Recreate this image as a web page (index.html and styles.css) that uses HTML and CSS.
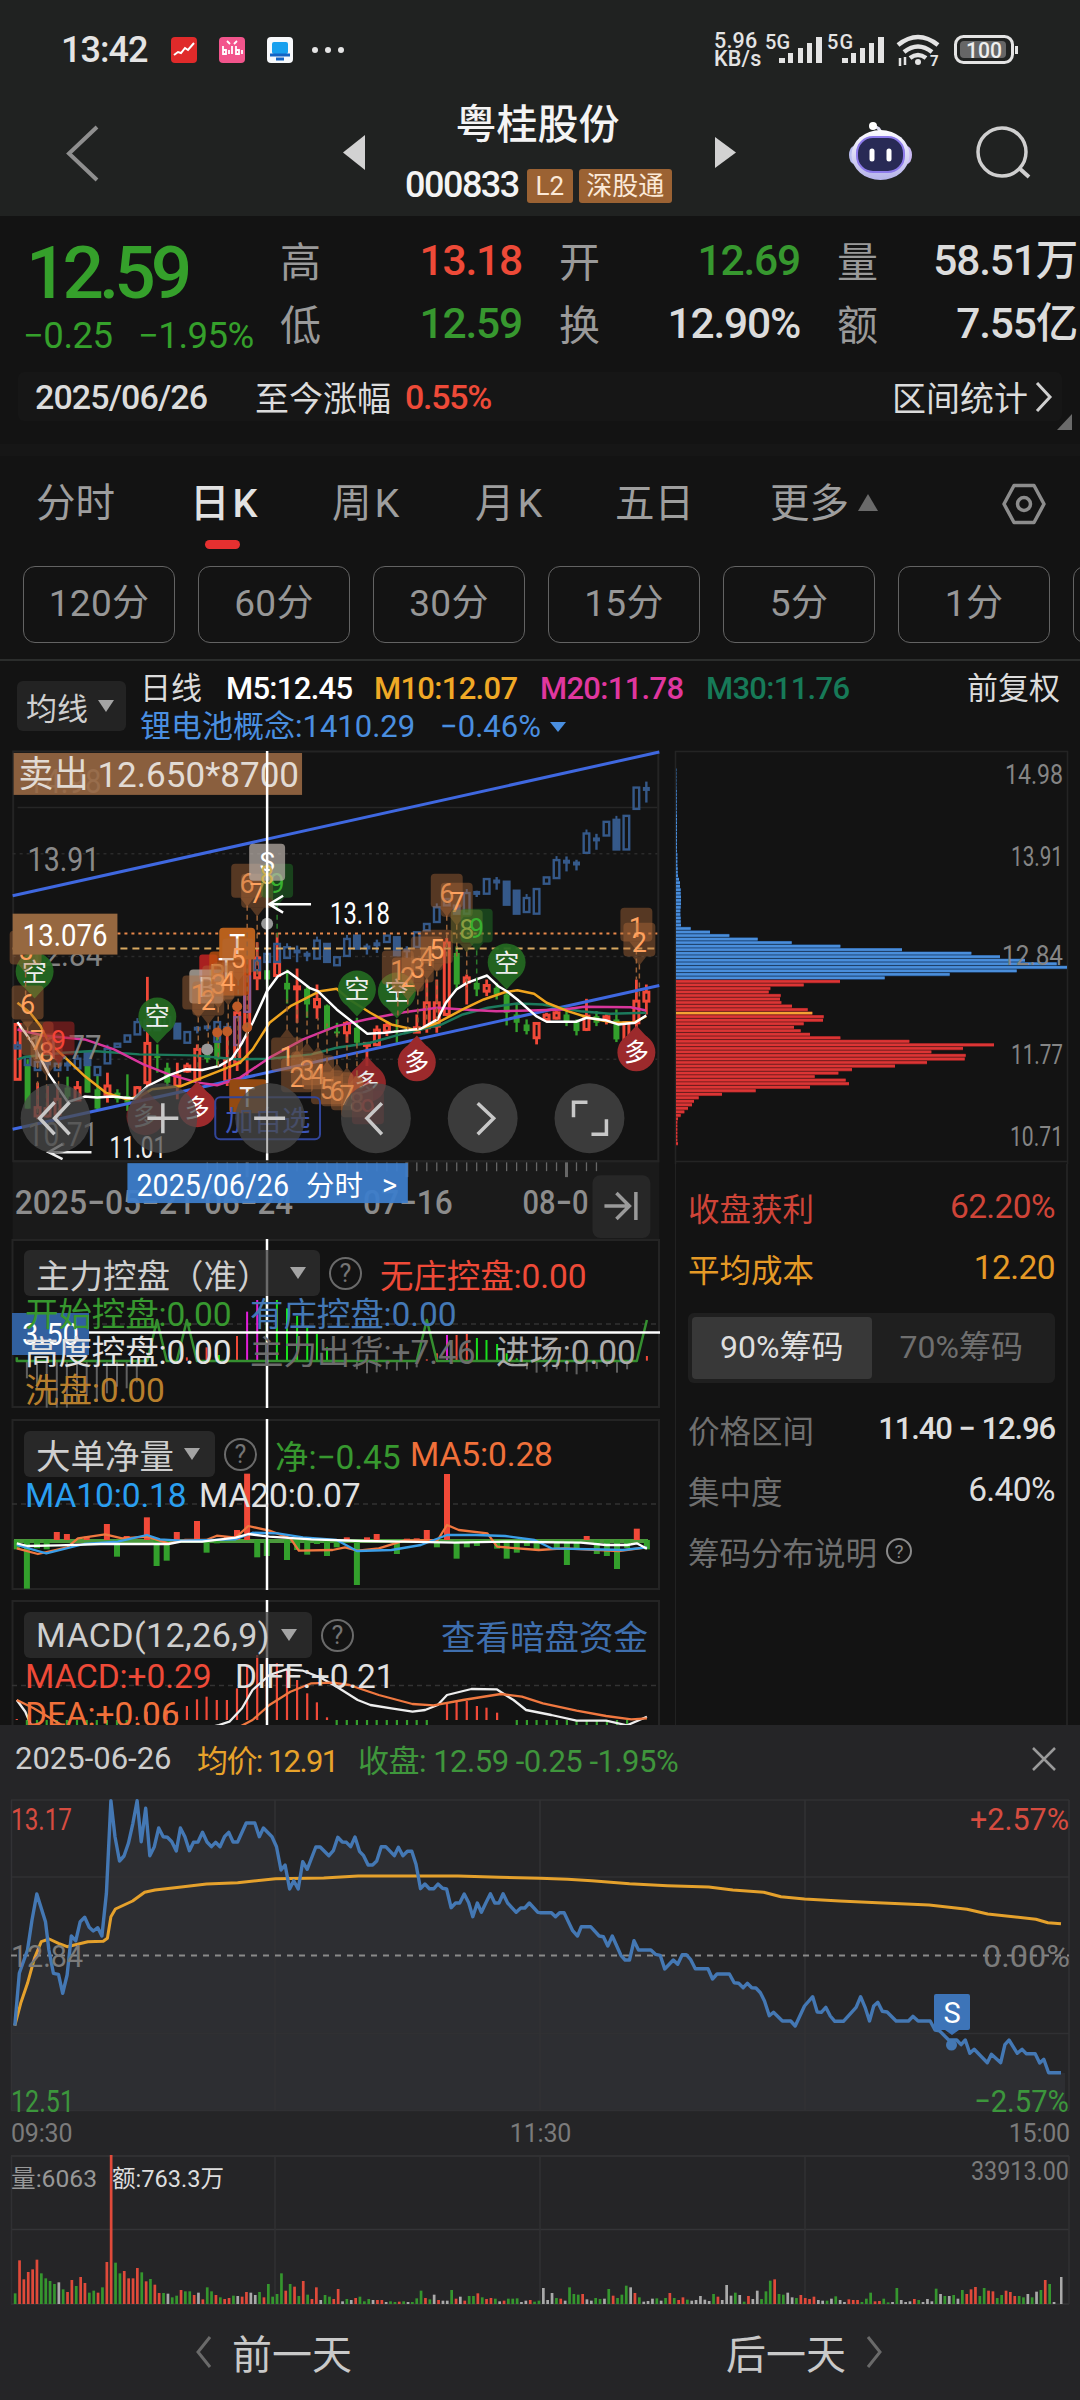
FILE: index.html
```html
<!DOCTYPE html>
<html lang="zh-CN">
<head>
<meta charset="utf-8">
<title>粤桂股份 000833</title>
<link rel="stylesheet" href="styles.css">
</head>
<body>
<header class="top">
  <div class="status">
    <span class="clock">13:42</span>
    <svg class="apps" width="174" height="28" viewBox="170 36 174 28">
      <rect x="171" y="37" width="26" height="26" rx="4" fill="#e02a2a"/>
      <path d="M174 55l4-3 3 1 4-5 3 2 6-7" fill="none" stroke="#fff" stroke-width="2"/>
      <rect x="219" y="37" width="26" height="26" rx="4" fill="#f2558c"/>
      <path d="M223 46v8h3v-4h-3M229 50v4M232 46v8M236 46v8h3v-4h-3M242 50v4M227 41l3 3M237 41l-3 3" fill="none" stroke="#fff" stroke-width="1.8"/>
      <rect x="267" y="37" width="26" height="26" rx="4" fill="#f7f9fb"/>
      <rect x="272" y="42" width="16" height="12" rx="2" fill="#18a0ee"/><path d="M270 55h20M276 59h8" stroke="#1464c4" stroke-width="3"/>
      <g fill="#e4e4e4"><circle cx="315" cy="50" r="3"/><circle cx="328" cy="50" r="3"/><circle cx="341" cy="50" r="3"/></g>
    </svg>
    <span class="speed">5.96<br>KB/s</span>
    <svg class="signal" width="255" height="36" viewBox="765 32 255 36">
      <g class="lbl" fill="#e4e4e4" font-size="20" font-weight="500"><text x="765" y="49" textLength="25">5G</text><text x="827" y="49" textLength="26">5G</text></g>
      <g fill="#e4e4e4"><path d="M779 58h6v5h-6zM788 53h5v10h-5zM798 48h5v15h-5zM807 43h5v20h-5zM816 37h6v26h-6zM842 58h6v5h-6zM851 53h5v10h-5zM860 48h5v15h-5zM869 43h5v20h-5zM878 37h6v26h-6z"/></g>
      <g fill="none" stroke="#e4e4e4" stroke-width="4.5"><path d="M898 45q20-16 40 0M904 52q14-11 28 0M910 58q8-6 16 0"/><path d="M900 58v8M905 57v8" stroke-width="2.5"/></g>
      <circle cx="918" cy="62" r="3" fill="#e4e4e4"/>
      <text class="lbl" x="930" y="66" font-size="15" fill="#e4e4e4" font-weight="700">7</text>
      <rect x="955.500" y="36.500" width="57" height="26" rx="8" fill="none" stroke="#e4e4e4" stroke-width="3"/>
      <rect x="960" y="41" width="46" height="17" rx="4" fill="#666"/>
      <path d="M1016.500 46v8" stroke="#e4e4e4" stroke-width="3"/>
      <text class="lbl" x="966" y="58" font-size="22" font-weight="500" fill="#eee" textLength="36" lengthAdjust="spacingAndGlyphs">100</text>
    </svg>
  </div>
  <nav class="nav">
    <svg class="ico" width="34" height="60" viewBox="65 123 34 60"><path d="M97 127L69 153.500L97 180" fill="none" stroke="#8f8f8f" stroke-width="4"/></svg>
    <svg class="ico prev" width="24" height="36" viewBox="342 134 24 36"><path d="M343 152.500L365 135v35z" fill="#d2d2d2"/></svg>
    <div class="name">
      <h1>粤桂股份</h1>
      <div class="code"><b>000833</b><i>L2</i><i class="sz">深股通</i></div>
    </div>
    <svg class="ico next" width="24" height="36" viewBox="713 134 24 36"><path d="M735 152.500L714 137v31z" fill="#d2d2d2"/></svg>
    <svg class="ico robot" width="66" height="62" viewBox="846 120 66 62">
      <defs><linearGradient id="rb" x1="0" y1="0" x2="0" y2="1"><stop offset="0" stop-color="#fdfcff"/><stop offset="1" stop-color="#b5b3ea"/></linearGradient></defs>
      <path d="M880 134q-1-7-7-7" fill="none" stroke="#dcdcf0" stroke-width="3"/><circle cx="872" cy="126" r="4" fill="#fff"/>
      <ellipse cx="853" cy="155" rx="5" ry="9" fill="#b9bdf0"/><ellipse cx="906" cy="155" rx="5" ry="9" fill="#c9b9f4"/>
      <ellipse cx="879.500" cy="155" rx="29" ry="25" fill="url(#rb)"/>
      <rect x="856" y="137" width="47" height="35" rx="16" fill="#282a55" stroke="#8d7bea" stroke-width="2"/>
      <path d="M871 151v8M888 151v8" stroke="#fff" stroke-width="5" stroke-linecap="round"/>
    </svg>
    <svg class="ico" width="58" height="58" viewBox="973 123 58 58"><circle cx="1001" cy="152" r="24" fill="none" stroke="#cfcfcf" stroke-width="3.500"/><path d="M1018 168l10 9" stroke="#cfcfcf" stroke-width="4"/></svg>
  </nav>
</header>

<section class="quote">
  <div class="last"><strong>12.59</strong><p><span>−0.25</span><span>−1.95%</span></p></div>
  <dl>
    <div><dt>高</dt><dd class="up">13.18</dd></div>
    <div><dt>开</dt><dd class="down">12.69</dd></div>
    <div><dt>量</dt><dd>58.51万</dd></div>
    <div><dt>低</dt><dd class="down">12.59</dd></div>
    <div><dt>换</dt><dd>12.90%</dd></div>
    <div><dt>额</dt><dd>7.55亿</dd></div>
  </dl>
</section>
<section class="since">
  <span class="day">2025/06/26</span><span class="t">至今涨幅</span><span class="up pct">0.55%</span>
  <span class="stat">区间统计</span>
  <svg width="18" height="32" viewBox="0 0 18 32"><path d="M2 2L15 16L2 30" fill="none" stroke="#d0d0d0" stroke-width="3"/></svg>
  <i class="corner"></i>
</section>
<nav class="tabs">
  <a>分时</a><a class="on k">日K</a><a class="k">周K</a><a class="k">月K</a><a>五日</a><a>更多</a>
  <svg class="tri" width="20" height="17" viewBox="0 0 20 17"><path d="M10 0L20 17H0z" fill="#6a6a6a"/></svg>
  <svg class="gear" width="44" height="42" viewBox="0 0 44 42"><path d="M12 2.500H32L42 21L32 39.500H12L2 21z" fill="none" stroke="#8c8c8c" stroke-width="3.500" stroke-linejoin="round"/><circle cx="22" cy="21" r="6.500" fill="none" stroke="#8c8c8c" stroke-width="3.500"/></svg>
</nav>
<div class="periods"><a>120分</a><a>60分</a><a>30分</a><a>15分</a><a>5分</a><a>1分</a><a></a></div>

<div class="legend">
  <div class="select"><span>均线</span><i></i></div>
  <div class="lines">
    <p><span class="l0">日线</span><span class="l1">M5:12.45</span><span class="l2">M10:12.07</span><span class="l3">M20:11.78</span><span class="l4">M30:11.76</span><span class="fq">前复权</span></p>
    <p class="idx"><span class="i1">锂电池概念:1410.29</span><span class="i2">−0.46%</span><i></i></p>
  </div>
</div>

<main class="board">
  <div class="left">
    <svg id="kline" class="kline" width="660" height="492" viewBox="0 748 660 492"></svg>
    <section class="panel p1">
      <svg id="ctrl" width="648" height="169" viewBox="12 1239 648 169"></svg>
      <div class="bar"><div class="select"><span>主力控盘（准）</span><i></i></div><em>?</em><span class="red">无庄控盘:0.00</span></div>
      <p><span class="green w225">开始控盘:0.00</span><span class="blue">有庄控盘:0.00</span></p>
      <p><span class="white w225">高度控盘:0.00</span><span class="dim w246">主力出货:+7.46</span><span class="soft">进场:0.00</span></p>
      <p><span class="gold">洗盘:0.00</span></p>
    </section>
    <section class="panel p2">
      <svg id="net" width="648" height="171" viewBox="12 1419 648 171"></svg>
      <div class="bar"><div class="select"><span>大单净量</span><i></i></div><em>?</em><span class="green w135">净:−0.45</span><span class="orange">MA5:0.28</span></div>
      <p><span class="sky w174">MA10:0.18</span><span class="white">MA20:0.07</span></p>
    </section>
    <section class="panel p3">
      <svg id="macd" width="648" height="125" viewBox="12 1600 648 125"></svg>
      <div class="bar"><div class="select"><span>MACD(12,26,9)</span><i></i></div><em>?</em><a>查看暗盘资金</a></div>
      <p><span class="red w210">MACD:+0.29</span><span class="white">DIFF:+0.21</span></p>
      <p><span class="orange">DEA:+0.06</span></p>
    </section>
  </div>
  <aside class="chips">
    <svg id="chips" width="394" height="416" viewBox="675 748 394 416"></svg>
    <div class="info">
      <p class="red"><span>收盘获利</span><b>62.20%</b></p>
      <p class="amber"><span>平均成本</span><b>12.20</b></p>
      <div class="seg"><a class="on">90%筹码</a><a>70%筹码</a></div>
      <p><span>价格区间</span><b class="rng">11.40 − 12.96</b></p>
      <p><span>集中度</span><b>6.40%</b></p>
      <p class="note"><span>筹码分布说明</span><em>?</em></p>
    </div>
  </aside>
</main>

<section class="sheet">
  <div class="head"><span class="d">2025-06-26</span><span class="a">均价: 12.91</span><span class="c">收盘: 12.59 -0.25 -1.95%</span>
    <svg width="26" height="26" viewBox="0 0 26 26"><path d="M2 2L24 24M24 2L2 24" stroke="#9a9a9a" stroke-width="2.500"/></svg></div>
  <svg id="day" class="day" width="1080" height="320" viewBox="0 1796 1080 320"></svg>
  <div class="times"><span>09:30</span><span>11:30</span><span>15:00</span></div>
  <svg id="vol" class="vol" width="1080" height="152" viewBox="0 2153 1080 152"></svg>
  <footer>
    <a><svg width="17" height="34" viewBox="0 0 17 34"><path d="M15 2L3 17L15 32" fill="none" stroke="#6a6a6a" stroke-width="3"/></svg>前一天</a>
    <a>后一天<svg width="17" height="34" viewBox="0 0 17 34"><path d="M2 2L14 17L2 32" fill="none" stroke="#6a6a6a" stroke-width="3"/></svg></a>
  </footer>
</section>
<script src="charts.js"></script>
</body>
</html>
```
FILE: styles.css
```css
* { box-sizing: border-box; margin: 0; padding: 0; }
body { width: 1080px; height: 2400px; overflow: hidden; background: #131313; color: #dcdcdc; font-family: Roboto, "Noto Sans CJK SC", sans-serif; font-size: 32px; white-space: nowrap; }
svg { display: block; flex: none; overflow: visible; }
svg text, .lbl { font-family: Roboto, "Noto Sans CJK SC", sans-serif; }
i, em { font-style: normal; }
p { display: flex; }
.up, .red { color: #ee4a38; }
.down, .green { color: #37982f; }
.top { height: 216px; background: #202221; }
.status { display: flex; height: 100px; padding: 32px 60px 0 61px; align-items: flex-start; color: #e4e4e4; }
.clock { width: 109px; font-size: 36px; line-height: 36px; letter-spacing: -1px; font-weight: 500; }
.apps { margin-top: 4px; }
.speed { margin-left: 370px; width: 51px; font-size: 21.500px; line-height: 18px; font-weight: 500; letter-spacing: .2px; }
.nav { display: flex; height: 116px; padding-left: 65px; align-items: flex-start; }
.nav .ico { margin-top: 23px; }
.nav .prev { margin: 34px 0 0 243px; }
.nav .name { width: 267px; margin-left: 39px; }
.nav h1 { font-size: 41px; line-height: 50px; font-weight: 500; color: #f4f4f4; text-align: center; padding-right: 2px; }
.code { display: flex; margin-top: 18px; align-items: center; }
.code b { width: 123px; font-size: 36px; line-height: 35px; font-weight: 500; letter-spacing: -1.500px; color: #f4f4f4; }
.code i { width: 46px; height: 34px; margin-right: 6px; border-radius: 3px; background: #9b6233; color: #fbe9d8; font-size: 26px; line-height: 34px; text-align: center; }
.code .sz { width: 94px; margin: 0; }
.nav .next { margin: 34px 0 0 42px; }
.nav .robot { margin: 20px 61px 0 109px; }

.quote { display: flex; height: 150px; }
.last { width: 281px; padding: 21px 0 0 26px; color: #35a02b; }
.last strong { display: block; font-size: 73px; line-height: 72px; font-weight: 500; letter-spacing: -5px; }
.last p { margin: 9px 0 0 -3px; font-size: 36.500px; line-height: 36px; }
.last span { width: 115px; letter-spacing: -.5px; }
.quote dl { display: grid; width: 798px; height: 126px; margin: 11px 0 0 -1px; grid-template-columns: 242px 241px 240px; column-gap: 37px; grid-auto-rows: 63px; }
.quote dl div { display: flex; justify-content: space-between; align-items: center; }
dt { font-size: 41px; color: #9a9a9a; }
dd { font-size: 42.500px; line-height: 57px; padding-top: 3px; font-weight: 500; letter-spacing: -1.200px; }
.since { position: relative; display: flex; align-items: center; height: 49px; margin: 6px 18px 0; padding: 0 9px 0 17px; background: #161616; border-radius: 6px; font-size: 34px; }
.since .day { width: 220px; font-weight: 500; letter-spacing: -.9px; }
.since .t { width: 150px; }
.since .pct { letter-spacing: -1.3px; font-weight: 500; }
.since .stat { margin-left: auto; margin-right: 7px; }
.corner { position: absolute; right: -10px; top: 42px; border-left: 15px solid transparent; border-bottom: 16px solid #6a6a6a; }

.tabs { position: relative; display: flex; height: 122px; margin-top: 23px; padding: 23px 0 0 36px; border-top: 12px solid #161616; align-items: flex-start; color: #9e9e9e; font-size: 39.500px; line-height: 49px; }
.tabs a:nth-child(1) { width: 154px; }
.tabs a:nth-child(2) { width: 142px; }
.tabs a:nth-child(3) { width: 143px; }
.tabs a:nth-child(4) { width: 140px; }
.tabs a:nth-child(5) { width: 155px; }
.tabs a:nth-child(6) { width: 88px; }
.tabs .k { letter-spacing: 3px; }
.tabs .on { position: relative; color: #e2e2e2; font-weight: 500; }
.tabs .on::after { content: ""; position: absolute; left: 15px; top: 61px; width: 35px; height: 9px; border-radius: 5px; background: #e63030; }
.tri { margin-top: 15px; }
.gear { margin: 4px 0 0 124px; }
.periods { display: flex; gap: 23px; width: 1080px; overflow: hidden; height: 95px; padding-left: 23px; border-bottom: 2px solid #2b2d2c; }
.periods a { flex: none; width: 152px; height: 77px; border: 1.500px solid #636363; border-radius: 12px; color: #979797; font-size: 37px; line-height: 74px; text-align: center; letter-spacing: .3px; }

.legend { display: flex; height: 87px; padding-left: 17px; }
.select { display: flex; align-items: center; background: rgba(48,48,48,.72); border-radius: 6px; color: #cfcfcf; }
.select i { border: 8px solid transparent; border-top: 12px solid #a4a4a4; border-bottom: 0; }
.legend .select { width: 109px; height: 50px; margin-top: 20px; padding-left: 9px; font-size: 31px; background: #232323; }
.legend .select i { margin-left: 10px; }
.lines { width: 939px; margin-left: 14px; padding-top: 9px; font-weight: 500; font-size: 31px; line-height: 38px; }
.lines p { align-items: center; }
.l0, .fq, .idx { font-weight: 400; }
.l0 { width: 86px; } .l1 { width: 148px; color: #fff; } .l2 { width: 166px; color: #f0a926; } .l3 { width: 166px; color: #e0379f; } .l4 { color: #177a58; }
.l1, .l2, .l3, .l4 { letter-spacing: -.7px; }
.fq { margin-left: auto; margin-right: 19px; }
.idx { color: #4a8fe0; }
.i1 { width: 300px; } .i2 { width: 110px; }
.idx i { border: 8px solid transparent; border-top: 10px solid #4a8fe0; border-bottom: 0; }

.board { display: flex; height: 977px; overflow: hidden; }
.left { width: 660px; flex: none; }
.kline { height: 491px; }
.panel { position: relative; width: 648px; margin: 0 0 10px 12px; padding: 11px 0 0 12px; font-size: 33.500px; }
.panel > svg { position: absolute; left: 0; top: 0; }
.panel .bar, .panel p { position: relative; }
.p1 { height: 170px; } .p2 { height: 171px; padding-top: 12px; } .p3 { height: 125px; padding-top: 12px; margin: 0 0 0 12px; }
.bar { display: flex; height: 46px; align-items: center; }
.bar .select { height: 46px; padding-left: 12px; }
.p1 .select { width: 296px; } .p2 .select { width: 191px; } .p3 .select { width: 288px; }
.p1 .select i { margin-left: 19px; } .p2 .select i { margin-left: auto; margin-right: 15px; } .p3 .select i { margin-left: auto; margin-right: 15px; }
.p2 .select span { font-size: 34.500px; } .p3 .select span { font-size: 34px; letter-spacing: .4px; }
em { width: 33px; height: 33px; margin: 0 18px 0 9px; border: 2px solid #6a6a6a; border-radius: 50%; color: #757575; font-size: 25px; line-height: 29px; text-align: center; }
.panel p { padding-left: 1px; line-height: 37px; height: 38px; }
.panel p, .bar > span { letter-spacing: -.1px; }
.w225 { width: 225px; } .w246 { width: 246px; } .w135 { width: 135px; } .w174 { width: 174px; } .w210 { width: 210px; }
.bar a { margin-left: auto; margin-right: 12px; color: #3f6fae; font-size: 34.500px; }
.blue { color: #4478b5; } .white { color: #e2e2e2; } .dim { color: #6c6c6c; } .soft { color: #ababab; } .gold { color: #b87f2c; } .orange { color: #f0703a; } .sky { color: #2a9ff0; }

.chips { width: 394px; margin-left: 15px; }
.info { height: 562px; margin: 0 1px 0 0; padding: 12px 11px 0 12px; border: solid #222; border-width: 0 2px 0 1px; }
.info p { justify-content: space-between; align-items: center; height: 61px; color: #6f6f6f; font-size: 31.500px; }
.info p.red { color: #cf4438; } .info p.amber { color: #e59a26; }
.info b { font-size: 33.500px; font-weight: 400; letter-spacing: -.6px; }
.info p:not(.red):not(.amber) b { color: #dedede; }
.info .rng { font-weight: 500; font-size: 31px; letter-spacing: -1.100px; }
.seg { display: flex; height: 70px; margin: 15px 0; padding: 4px; background: #1f1f1f; border-radius: 6px; }
.seg a { width: 180px; line-height: 61px; text-align: center; border-radius: 4px; color: #6f6f6f; }
.seg .on { background: #383838; color: #dedede; }
.info .note { justify-content: flex-start; }
.note em { width: 26px; height: 26px; margin: 0 0 0 9px; font-size: 19px; line-height: 23px; color: #8a8a8a; border-color: #8a8a8a; }

.sheet { position: relative; height: 675px; background: #252527; }
.head { display: flex; height: 71px; padding: 0 23px 4px 15px; align-items: center; font-size: 31px; color: #cdcdcd; }
.head .d { width: 182px; } .head .a { width: 161px; color: #e8a32b; letter-spacing: -1.600px; } .head .c { color: #3f963c; letter-spacing: -.5px; }
.head svg { margin-left: auto; }
.times { display: flex; justify-content: space-between; height: 37px; padding: 5px 10px 0 11px; font-size: 25px; line-height: 26px; color: #7b7b7b; letter-spacing: -.2px; }
footer { display: flex; height: 95px; justify-content: space-between; padding: 0 197px 2px 195px; align-items: center; font-size: 40px; color: #c9c9c9; }
footer a { display: flex; align-items: center; gap: 20px; }
```
FILE: charts.js
```javascript
const RED = '#f14938', GREEN = '#33a02c', BLUE = '#35598a';
const out = {};
function put(id, s) { out[id] = (out[id] || '') + s; }
function flush() { for (const id in out) document.getElementById(id).innerHTML = out[id]; }
const line = (x1, y1, x2, y2, c, w = 2, extra = '') => `<path d="M${x1} ${y1}L${x2} ${y2}" stroke="${c}" stroke-width="${w}" fill="none" ${extra}/>`;
const rect = (x, y, w, h, c, extra = '') => `<rect x="${x}" y="${y}" width="${w}" height="${h}" fill="${c}" ${extra}/>`;
const text = (x, y, s, size, c, len, extra = '') => `<text x="${x}" y="${y}" font-size="${size}" fill="${c}" ${len ? `textLength="${len}" lengthAdjust="spacingAndGlyphs"` : ''} ${extra}>${s}</text>`;
const nums = s => s.trim().split(/\s+/).map(p => p.split(',').map(Number));
// points on a drawing grid of kx by 3 units per pixel
const scaled = (s, kx, y0, x0 = 0) => nums(s).map(([x, y]) => [+(x0 + x / kx).toFixed(1), +(y0 + y / 3).toFixed(1)]);
const poly = (pts, c, w) => `<polyline points="${pts.join(' ')}" fill="none" stroke="${c}" stroke-width="${w}" stroke-linejoin="round"/>`;
const K = 2.376;
const X = i => 17 + 10 * i;

/* daily candles */
put('kline', rect(12, 1163, 648, 77, '#1a1a1a'));
put('kline', `<path d="M12.500 1162V751.500H659V1162z" fill="none" stroke="#242424" stroke-width="2"/>`);
put('kline', line(17, 807.5, 658, 807.5, '#262626', 1.5));
[854, 957, 1060].forEach(y => put('kline', line(12, y, 658, y, '#2b2b2b', 1.5, 'stroke-dasharray="3 4"')));

const candles = `r375,540,375,540 g480,628,500,628 r550,660,625,650 r560,655,628,650 r560,650,600,645 g532,600,565,592 r545,605,565,602 g460,580,470,580 g530,630,570,628 r520,610,560,585 g570,610,580,600 g525,635,590,610 r560,600,565,598 r232,560,432,550 g435,520,470,475 g490,560,505,550 r490,600,530,560 r490,520,500,515 r435,545,450,540 g455,490,460,480 g400,505,430,480 r380,560,480,545 r310,515,340,490 r105,535,150,380 r128,272,175,235 g160,260,212,240 r100,230,190,228 g210,312,250,270 r207,370,262,265 g262,355,268,315 r255,358,300,322 g315,395,318,392 g370,410,396,402 r365,430,372,400 g355,435,385,430 r430,500,432,436 r378,440,392,436 r365,410,378,395 g360,430,392,398 g385,402,390,398 r345,400,385,398 r240,400,310,385 r240,400,310,380 r115,350,130,345 g140,270,160,255 r225,315,235,248 g240,290,250,270 r240,290,258,275 g250,300,265,285 g280,378,285,340 g310,398,345,370 g360,405,375,395 r370,435,372,415 r340,365,347,360 r335,360,340,356 g335,380,345,370 g360,408,368,395 r298,395,350,390 g335,380,350,370 r345,375,352,360 g330,428,360,420 r365,440,370,438 r240,400,305,370 r255,345,278,305`.split(' ');
candles.forEach((d, i) => {
  const c = d[0] === 'r' ? RED : GREEN, [h, l, t, b] = d.slice(1).split(',').map(v => 900 + v / 3), x = X(i);
  if (d[0] === 'r') put('kline', line(x, h, x, t, c, 2.8) + line(x, b, x, l, c, 2.8) + rect(x - 2.500, t, 5, Math.max(b - t, 2), '#131313', `stroke="${c}" stroke-width="3"`));
  else put('kline', line(x, h, x, l, c, 2.4) + rect(x - 3, t, 6, Math.max(b - t, 2), c));
});

/* sector index candles */
const idx = nums(`435,450 470,500 485,515 480,515 490,515 485,515 475,510 455,500 500,530 445,495 430,445 405,430 365,408 360,395 355,395 350,380 370,420 395,433 380,402 378,395 365,430 380,400 350,440 228,340 180,215 160,190 130,190 140,178 138,188 155,185 120,180 130,190 170,200 115,172 105,150 132,165 120,160 105,130 110,170 140,175 95,145 70,95 20,70 -5,20 15,45 -23,45 -27,-8 -65,-15 -68,-30 -57,18 -30,45 -8,40 -35,45 -70,-45 -122,-62 -130,-85 -120,-88 -202,-138 -198,-150 -237,-190 -243,-148 -255,-148 -340,-270 -355,-292`);
const solid = new Set([7, 14, 16, 31, 34, 38, 44, 49, 50, 60]);
idx.forEach(([a, b], i) => {
  const y = 900 + a / 3, h = (b - a) / 3, x = X(i), c = i === 22 || i === 23 ? '#8a5a92' : BLUE;
  if ([3, 5, 18, 19, 28, 29, 35, 36, 39, 46, 48, 55, 56, 58, 63].includes(i)) put('kline', line(x, y, x, y + h, c, 2.4) + line(x - 3.500, y + h * .35, x + 3.500, y + h * .35, c, 4));
  else put('kline', rect(x - 2.8, y + 1, 5.600, Math.max(h - 2, 3), solid.has(i) ? c : 'none', `stroke="${c}" stroke-width="2.4"`) + (i % 3 ? '' : line(x, y - 3, x, y + 1, c, 2)));
});

put('kline', line(12, 896, 660, 752, '#3f68e0', 3) + line(12, 1130, 660, 986, '#3f68e0', 3));
put('kline', line(117, 934, 658, 934, '#e8884a', 2, 'stroke-dasharray="3 4"') + line(12, 949, 658, 949, '#d8a860', 2, 'stroke-dasharray="7 5"'));
[['40,480 60,472 150,460 220,455 330,465 460,468 560,480 640,478 740,465 800,445 880,430 960,402 1050,375 1100,345 1160,325 1230,312 1290,315 1380,335 1450,343 1537,340', '#1c7a5c'],
 ['40,390 100,408 200,420 270,450 340,495 400,525 470,550 515,558 570,535 640,475 720,420 800,380 870,360 960,338 1040,325 1100,330 1180,335 1260,333 1340,330 1390,322 1500,323 1537,333', '#d8369c'],
 ['40,310 70,340 95,380 115,430 150,470 200,530 250,580 300,600 330,592 360,570 430,560 480,535 530,510 570,490 600,450 640,370 690,320 760,275 800,268 830,300 880,340 930,375 990,392 1040,370 1100,330 1150,300 1200,278 1230,272 1270,283 1300,310 1350,335 1400,355 1460,370 1510,368 1537,350', '#f0a51f'],
 ['40,368 75,430 115,525 160,608 200,592 230,595 265,592 318,598 350,560 400,528 440,510 480,512 520,500 550,478 575,430 600,370 634,275 660,230 683,215 710,240 735,265 755,275 800,330 850,380 873,403 915,400 950,395 1000,388 1040,360 1060,310 1085,270 1110,250 1158,228 1185,260 1205,275 1230,300 1275,350 1300,367 1370,367 1395,355 1440,362 1470,375 1510,370 1537,348', '#fff']
].forEach(([p, c]) => put('kline', poly(scaled(p, K, 900), c, 2.5)));
put('kline', '<g opacity=".95">' + text(27, 793, '14.98', 33, '#888', 74) + text(27, 871, '13.91', 33, '#909090', 72) + text(27, 966, '12.84', 33, '#888', 75) + text(27, 1060, '11.77', 33, '#888', 74) + text(27, 1147, '10.71', 33, '#888', 71) + '</g>');

const balloon = (x, y, s, c, up, o = 1) => put('kline', `<g opacity="${o}"><circle cx="${x}" cy="${y}" r="19" fill="${c}"/><path d="M${x - 13} ${y + (up ? -13 : 13)}L${x} ${y + (up ? -27 : 27)}L${x + 13} ${y + (up ? -13 : 13)}z" fill="${c}"/>${text(x, y + 9, s, 25, '#fff', 0, 'text-anchor="middle"')}</g>`);
[[34, 972], [157, 1017], [357, 990], [397, 992], [507, 963]].forEach(([x, y]) => balloon(x, y, '空', '#246a22', 0, .93));
[[145, 1117, .6], [197, 1109, 1], [367, 1084, .9], [417, 1063, 1], [637, 1053, 1]].forEach(([x, y, o]) => balloon(x, y, '多', '#9c2a2c', 1, o));

/* signal tags: centre x, digit baseline, label, tone, pointer side, end of the dashed stem */
const tones = { o: ['rgba(178,108,58,.42)', '#ffa25f'], g: ['rgba(34,130,40,.42)', '#38b030'], y: ['rgba(130,120,50,.5)', '#d5b050'], r: ['rgba(180,35,35,.5)', '#f44336'] };
function tag(x, y, s, tone = 'o', up = 0, to = 0) {
  const [bg, fg] = tones[tone], t = y - 30, b = y + 4;
  if (to) put('kline', line(x, up ? t - 8 : b + 8, x, to, tone === 'g' ? '#2b7a2c' : '#9a6238', 1.5, 'stroke-dasharray="5 4"'));
  put('kline', rect(x - 16, t, 32, b - t, bg, 'rx="4"') + `<path d="${up ? `M${x - 7} ${t}L${x} ${t - 9}L${x + 7} ${t}z` : `M${x - 7} ${b}L${x} ${b + 9}L${x + 7} ${b}z`}" fill="${bg}"/>` + text(x, y - 1, s, 27, fg, 0, 'text-anchor="middle"'));
}
tag(25, 961, '5', 'o', 0, 1000); tag(27, 1016, '6', 'o', 0, 1040); tag(37, 1052, '7', 'o', 0, 1120); tag(46, 1064, '8', 'o', 0, 1120); tag(58, 1052, '9', 'r', 0, 1120);
put('kline', rect(199, 955, 18, 26, '#a82020', 'rx="3"') + rect(209, 952, 40, 44, 'rgba(190,80,15,.8)', 'rx="4"') + rect(219, 928, 36, 32, '#b8601c', 'rx="4"') + rect(189, 970, 34, 34, 'rgba(190,180,170,.75)', 'rx="4"'));
put('kline', text(198, 998, 'B', 28, '#fff') + text(229, 954, 'T', 27, '#fff') + text(218, 978, 'T', 27, '#fff') + text(209, 984, 'B', 27, '#e8904a'));
tag(198, 1006, '1', 'o', 0, 1070); tag(208, 1012, '2', 'o', 0, 1050); tag(218, 996, '3', 'o', 0, 1070); tag(228, 993, '4', 'o', 0, 1070); tag(238, 969, '5', 'o', 0, 1060);
put('kline', '<g fill="#c05c28"><circle cx="217" cy="1033" r="5"/><circle cx="227" cy="1032" r="5"/><circle cx="237" cy="1007" r="5"/><circle cx="247" cy="1028" r="5"/></g><circle cx="207" cy="1050" r="6" fill="#999"/><circle cx="267" cy="924" r="6" fill="#999"/>');
tag(247, 894, '6', 'o', 0, 1040); tag(257, 904, '7', 'o', 0, 980); tag(277, 894, '9', 'g', 0, 940);
put('kline', rect(249, 844, 36, 37, 'rgba(190,180,172,.7)', 'rx="4"') + text(267, 871, 'S', 26, '#fff', 0, 'text-anchor="middle"') + text(267, 884, '8', 25, '#cfb050', 0, 'text-anchor="middle"'));
tag(398, 981, '1', 'o', 0, 1030); tag(408, 988, '2', 'o', 0, 1030); tag(418, 979, '3', 'o', 0, 1030); tag(427, 967, '4', 'o', 0, 1020); tag(437, 960, '5', 'o', 0, 1020);
tag(447, 904, '6', 'o', 0, 960); tag(457, 913, '7', 'o', 0, 960); tag(467, 940, '8', 'y', 0, 990); tag(477, 939, '9', 'g', 0, 985);
tag(637, 938, '1', 'o', 0, 980); tag(640, 953, '2', 'o', 0, 1000);
[[287, 1068, 1], [297, 1089, 2], [307, 1082, 3], [318, 1086, 4], [327, 1101, 5], [337, 1103, 6], [347, 1107, 7], [357, 1114, 8]].forEach(([x, y, s]) => tag(x, y, s, 'o', 1, 1000 + (x - 287) * .6));
tag(368, 1121, '9', 'r', 1);

put('kline', rect(229, 1080, 38, 34, '#944a12', 'rx="4"') + text(239, 1108, 'T', 27, '#eee'));
put('kline', text(330, 924, '13.18', 31, '#fff', 60) + '<path d="M311 904.500H270M283 896L269 904.500L283 913" fill="none" stroke="#fff" stroke-width="2.500"/>');
put('kline', text(109, 1159, '11.01', 31, '#eee', 57) + '<path d="M91 1153H50M62 1145L48 1153L62 1160" fill="none" stroke="#eee" stroke-width="2.500"/>');
put('kline', `<rect x="215" y="1098" width="105" height="42" rx="5" fill="none" stroke="#31459a" stroke-width="2"/>` + text(225, 1132, '加自选', 28.500, '#3c55b8'));
put('kline', rect(12, 914, 105, 41, '#966840') + text(22, 946, '13.076', 32, '#fff', 85));
put('kline', rect(13, 753, 289, 42, 'rgba(155,106,68,.88)') + text(18, 787, '卖出 12.650*8700', 36, '#e2dbd4', 281));
/* chart controls */
[55, 162, 270, 376, 483, 590].forEach(x => put('kline', `<circle cx="${x}" cy="1119" r="35" fill="rgba(74,74,74,.74)"/>`));
put('kline', line(267, 751, 267, 1084, '#fff', 2.5) + line(267, 1084, 267, 1154, '#bbb', 2) + line(267, 1154, 267, 1163, '#fff', 2.5));
put('kline', '<path d="M54 1103L39 1119L54 1135M69 1103L54 1119L69 1135M147 1119H178M162.500 1104V1134M254 1119H285M382 1104L367 1119L382 1135M478 1104L494 1119L478 1135M574 1118V1103H588M607 1120V1135H592" fill="none" stroke="#c8c8c8" stroke-width="3.500"/>');
/* time ruler */
for (let x = 207; x < 605; x += 10) put('kline', line(x, 1163, x, x === 247 || x === 407 || x === 567 ? 1178 : 1172, '#666', x === 247 || x === 407 || x === 567 ? 3 : 1.3));
put('kline', line(12, 1162, 660, 1162, '#242424'));
[['2025−05−21', 14, 181], ['06−24', 204, 89], ['07−16', 363, 90], ['08−0', 523, 66]].forEach(([s, x, w]) => put('kline', text(x, 1215, s, 34, '#8c8c8c', w, 'font-weight="500"')));
put('kline', rect(127, 1164, 281, 40, 'rgba(61,125,203,.94)') + text(136, 1197, '2025/06/26', 31, '#fff', 153) + text(306, 1197, '分时', 28.500, '#fff') + text(382, 1196, '&gt;', 29, '#fff'));
put('kline', rect(593, 1176, 58, 63, '#272727', 'rx="8"') + '<path d="M605 1207H630M617 1194L630 1207L617 1220M636.500 1193V1221" fill="none" stroke="#9a9a9a" stroke-width="3.500"/>');

/* control indicator */
const frame = (t, b) => `<path d="M12.500 ${b}V${t + 1}H659V${b}z" fill="none" stroke="#242424" stroke-width="2"/>`;
put('ctrl', frame(1239, 1407) + line(12, 1324, 658, 1324, '#333', 1.5, 'stroke-dasharray="5 4"') + rect(12, 1313, 77, 42, '#31609f') + text(22, 1345, '3.50', 31, '#fff', 57));
const bars = (id, base, s, w) => s.split(' ').forEach(d => { const [x, y] = d.slice(1).split(',').map(Number); const c = { r: RED, g: GREEN, l: '#19e01c', m: '#e01fd8', w: '#606060' }[d[0]]; const px = x / K; const top = Math.min(base[0], y), bot = Math.max(base[0], y); put(id, rect((px - w / 2).toFixed(1), base[1] + top / 3, w, (bot - top) / 3, c)); });
bars('ctrl', [422, 1220], 'r444,412 r468,390 r491,382 l520,405 r563,348 m587,275 m611,240 l634,235 l658,240 l682,265 l706,288 l730,318 l753,342 l777,382 r1014,418 r1038,400 m1062,345 r1085,345 r1109,342 l1133,354 l1156,360 l1181,372 l1204,400 l1228,415 r1537,408 w64,475 w88,505 w111,563 w135,563 w159,563 w183,547 w206,528 w230,545 w254,520 w278,500 w301,505 w325,487 w848,448 w872,460 w895,457 w919,448 w943,452 w967,448 w990,442 w1252,448 w1275,458 w1299,455 w1323,448 w1347,455 w1370,463 w1394,455 w1418,447 w1442,440 w1466,458 w1490,448', 2);
put('ctrl', poly(scaled('40,412 40,423 350,423 373,300 396,423 420,423 444,300 468,423 990,423 1014,300 1038,423 1513,423 1537,300', K, 1220), '#358f30', 2.5));
put('ctrl', line(89, 1332.5, 660, 1332.5, '#fff', 2.5) + line(267, 1239, 267, 1408, '#fff', 2.5));

/* net large orders */
put('net', frame(1419, 1589) + line(12, 1504, 658, 1504, '#333', 1.5, 'stroke-dasharray="5 4"') + rect(14, 1539, 634, 4, '#4b9a3c'));
bars('net', [210, 1470], 'g40,238 g64,356 g88,235 g111,238 r135,186 r159,192 r206,200 r254,162 g278,260 r301,198 r349,142 g372,288 g396,272 r420,186 r468,153 g491,248 g515,220 r539,198 r563,180 r587,11 g611,262 g634,258 g682,270 g706,240 g730,254 g753,222 g777,258 g800,232 r824,202 g848,345 r872,202 r895,192 g943,252 r967,206 r990,205 r1014,180 g1038,232 r1062,12 g1085,266 g1109,232 g1133,228 g1181,236 g1204,266 g1228,248 g1252,228 g1275,238 g1323,240 g1347,285 g1370,236 r1394,198 g1418,252 g1442,258 g1466,297 g1490,234 r1513,176 g1537,238', 6);
[['40,235 90,252 160,232 185,205 250,193 290,205 350,200 400,220 440,210 490,210 515,197 560,203 590,168 640,182 690,205 710,242 790,240 820,232 850,242 900,235 960,212 1040,210 1062,165 1090,180 1158,190 1181,230 1280,240 1340,235 1470,243 1537,232', '#f07840'],
 ['40,225 110,250 200,222 280,215 349,195 380,208 430,212 560,208 600,188 660,190 720,202 800,210 848,243 930,240 1000,225 1062,195 1130,195 1200,198 1270,210 1310,235 1480,240 1537,232', '#3a9ee8'],
 ['40,220 65,228 140,226 240,222 400,222 430,215 480,215 560,203 590,192 640,200 740,208 860,213 960,215 1080,218 1200,215 1380,218 1440,225 1490,225 1513,220 1537,236', '#fff']
].forEach(([p, c]) => put('net', poly(scaled(p, K, 1470), c, 2.3)));
put('net', line(267, 1419, 267, 1590, '#fff', 2.5));

/* macd */
put('macd', frame(1600, 1760) + line(12, 1685.5, 658, 1685.5, '#333', 1.5, 'stroke-dasharray="5 4"'));
bars('macd', [750, 1470], 'r40,747 r325,740 r349,725 r372,710 r396,720 r420,725 r444,708 r468,688 r491,680 r515,690 r539,690 r563,655 r587,588 r611,555 r634,568 r658,580 r682,600 r706,630 r730,670 r753,697 r777,742 r1062,700 r1085,695 r1109,693 r1133,708 r1156,713 r1181,728 ' + [64, 88, 111, 135, 159, 183, 206, 230, 254, 278, 301, 800, 824, 848, 872, 895, 919, 943, 967, 990, 1014, 1228, 1252, 1275, 1299, 1323, 1347, 1370, 1394, 1418, 1442, 1466, 1490].map(x => `g${x},766`).join(' '), 2.2);
put('macd', poly(scaled('40,690 60,725 75,770 100,800 460,785 520,765 545,755 575,715 600,660 640,615 680,598 720,602 760,622 800,650 850,690 880,705 930,715 980,725 1010,720 1040,705 1062,675 1120,657 1180,658 1220,690 1250,720 1310,735 1370,752 1440,752 1490,766 1537,740', K, 1470), '#eee', 2.3));
put('macd', poly(scaled('40,690 80,715 120,745 160,775 540,790 600,750 640,705 690,665 740,640 790,638 830,645 900,675 980,702 1030,706 1100,690 1190,672 1240,680 1290,700 1370,722 1440,738 1500,748 1537,745', K, 1470), '#f07840', 2.3));
put('macd', line(267, 1600, 267, 1725, '#fff', 2.5));

/* cost distribution */
put('chips', '<path d="M675.500 1164V751.500H1067.500V1164M675.500 1161.500H1067.500" fill="none" stroke="#242424" stroke-width="1.500"/>');
const upper = [49, 49, 49, 49, 49, 49, 50, 50, 50, 50, 50, 50, 50, 51, 51, 51, 51, 51, 51, 51, 51, 51, 51, 51, 52, 52, 52, 52, 53, 53, 54, 57, 60, 60, 62, 62, 63, 63, 63, 62, 61, 61, 62, 62, 63, 92, 150, 208, 293, 395, 541, 726, 934, 1020, 1095, 1190, 1221, 1070, 869, 674];
const lower = [540, 431, 331, 326, 362, 360, 364, 396, 443, 457, 491, 489, 431, 402, 422, 450, 541, 748, 1002, 909, 814, 917, 914, 801, 705, 576, 535, 464, 557, 567, 450, 287, 186, 116, 102, 96, 84, 73, 62, 54, 52, 52, 52, 52, 52, 52, 54];
upper.concat(lower).forEach((v, i) => {
  const lo = i >= upper.length, avg = i === upper.length + 9, y = 928.6 + (i - 45) * 3.525, w = (v - 48) / 3;
  put('chips', rect(676, y - 1.75, w, 3.53, lo ? '#8a2222' : '#245086') + rect(676, y - 1.3, w, 2.4, avg ? '#f5a233' : lo ? '#dc3535' : '#4a8edb'));
});
[['14.98', 784, 58], ['13.91', 866, 52], ['12.84', 965, 61], ['11.77', 1064, 52], ['10.71', 1146, 53]].forEach(([s, y, w]) => put('chips', text(1063 - w, y, s, 27, '#858585', w)));

/* intraday line */
const price = scaled('43,917 56,760 80,690 93,600 107,522 132,605 142,690 155,760 170,763 182,820 195,765 207,648 220,662 233,605 246,592 259,622 271,633 284,623 296,648 309,520 322,242 334,350 347,423 360,408 373,370 386,310 398,242 410,365 423,265 435,407 448,380 461,324 474,350 486,352 499,365 512,393 524,324 537,350 550,392 562,367 575,366 588,337 601,366 614,380 626,367 639,380 652,350 664,337 677,366 690,366 715,309 740,309 753,350 765,324 790,350 803,380 816,450 828,435 841,507 853,482 866,507 879,425 892,448 917,381 930,381 955,407 968,392 981,352 994,366 1006,367 1018,380 1031,351 1044,394 1056,407 1069,435 1082,435 1094,423 1107,380 1120,380 1145,407 1157,382 1170,407 1183,394 1196,394 1208,433 1221,506 1234,492 1247,506 1260,506 1272,492 1285,505 1297,507 1310,563 1323,549 1335,549 1348,522 1361,548 1373,590 1386,549 1398,577 1411,548 1424,521 1437,549 1449,549 1461,521 1474,549 1499,577 1512,564 1524,564 1537,549 1562,577', 2.904, 1720)
  .concat(scaled('0,578 33,578 45,590 57,578 70,578 95,632 109,648 120,620 147,620 172,648 184,650 197,678 210,648 235,706 247,720 260,720 273,662 286,690 322,690 335,703 349,706 362,747 387,720 400,733 413,704 425,704 437,718 451,746 488,746 501,777 514,762 550,762 564,788 577,790 590,803 602,790 615,803 627,804 640,818 652,843 666,887 678,877 704,903 728,903 741,918 768,858 792,830 805,876 817,877 830,862 843,888 856,904 881,904 918,862 931,830 944,862 957,903 969,858 981,847 994,874 1008,876 1034,903 1070,903 1083,889 1098,903 1133,903 1147,930 1160,932 1187,960 1210,960 1223,974 1235,960 1248,1000 1261,988 1299,1028 1311,1003 1338,1028 1350,974 1362,960 1386,1000 1400,988 1412,1001 1438,1001 1451,1029 1463,1018 1477,1058 1513,1058', 2.904, 1720, 540));
const mean = scaled('43,917 60,850 80,790 100,715 120,665 143,657 170,670 195,680 225,673 255,665 300,664 312,655 322,590 335,567 385,543 420,517 450,510 520,502 600,492 690,488 800,476 940,474 1040,468 1330,468 1450,472 1568,475', 2.904, 1720)
  .concat(scaled('80,478 150,482 260,491 370,497 490,501 560,510 650,517 700,530 768,537 870,543 980,548 1130,555 1240,568 1300,582 1440,598 1475,608 1513,611', 2.904, 1720, 540));
put('day', `<polygon points="11,2026 ${price.join(' ')} 1065,2073 1065,2110 11,2110" fill="#2d2e32"/>`);
[1800, 1877, 2033.5, 2110.5].forEach(y => put('day', line(11, y, 1069, y, '#303033', 1.5)));
[11.5, 275, 540, 805, 1069].forEach(x => put('day', line(x, 1800, x, 2110, '#323235', 1.5)));
put('day', line(11, 1955.5, 1069, 1955.5, '#8a8a8a', 2, 'stroke-dasharray="6 6"') + poly(mean, '#e5a12c', 3) + poly(price, '#4478b4', 3.4));
put('day', text(11, 1830, '13.17', 32, '#d64c40', 61) + text(11, 1967, '12.84', 32, '#7b7b7b', 72) + text(11, 2112, '12.51', 32, '#3c963c', 63) + text(970, 1830, '+2.57%', 32, '#d64c40', 99) + text(983, 1967, '0.00%', 32, '#7b7b7b', 87) + text(974, 2112, '−2.57%', 32, '#3c963c', 95));
put('day', '<path d="M936 1994h32q2 0 2 2v32q0 2-2 2h-9l-7 5l-7-5h-9q-2 0-2-2v-32q0-2 2-2z" fill="#3d74b8"/><circle cx="951.500" cy="2045" r="5.500" fill="#4478b4"/>' + text(952, 2023, 'S', 29, '#fff', 0, 'text-anchor="middle"'));

/* minute volume */
[2156, 2229.5, 2304].forEach(y => put('vol', line(11, y, 1069, y, '#343437', 1.5)));
[11.5, 275, 540, 805, 1069].forEach(x => put('vol', line(x, 2156, x, 2304, '#303033', 1.5)));
const volume = 'g32 r131 r74 r96 r104 r133 g92 g77 g69 g60 w65 g44 r36 r72 g54 r81 r63 g34 g40 r34 g50 r126 r447 g124 g92 r99 r77 r77 r108 g95 r68 g75 r58 r33 g33 w31 g20 g25 r42 g38 g38 r27 w34 r14 g50 g38 r27 g20 r15 r18 g25 w24 r22 r36 w34 w27 g36 r20 g60 g22 g30 g92 r40 g60 r52 g24 r69 g28 r15 r50 w12 g27 g22 r15 r45 w8 g15 w12 r18 g22 g8 g15 w12 r12 r12 w6 g8 g6 r7 g8 w6 g6 g17 g40 r18 g14 w28 r12 w10 w10 g42 r16 w22 r10 g24 g24 r32 g20 r15 r18 g16 w8 r10 g16 g16 g17 w6 w10 r12 g7 g10 w48 w12 w33 g18 r16 w10 g50 g30 g28 r30 w14 w10 g18 g15 w16 g45 r25 g18 g28 g55 w50 r33 g20 w7 w9 w16 g17 w10 g18 r33 g18 r12 r20 g13 w10 w12 w24 w13 w9 g30 r22 w12 w57 w25 g34 w27 g7 r24 w15 w40 g15 g38 g70 r74 g30 g28 w34 w20 g18 r27 r18 r15 r22 w12 w10 g10 w16 g23 w12 w6 r14 r12 r12 g6 g16 g34 r8 r9 g16 g5 w6 g48 w12 w6 w8 r15 g12 w6 w15 w8 g46 w30 g24 w24 g27 w16 g42 r30 r44 r51 g24 g48 r40 r38 g18 g27 r40 r36 r24 g24 g20 w30 g20 w37 g42 r72 g60 w6'.split(' ');
const vc = { r: '#e04a3a', g: '#35962e', w: '#a9a9a9' };
volume.forEach((v, i) => { const h = v.slice(1) / 3; put('vol', rect((13.8 + i * 4.365).toFixed(1), 2304 - h, 2.7, h, vc[v[0]])); });
put('vol', rect(1060, 2277, 2.5, 27, '#a9a9a9'));
put('vol', text(11, 2187, '量:6063', 24, '#989898', 86) + text(112, 2187, '额:763.3万', 24, '#dedede', 112) + text(971, 2180, '33913.00', 26, '#7b7b7b', 98));
flush();
```
